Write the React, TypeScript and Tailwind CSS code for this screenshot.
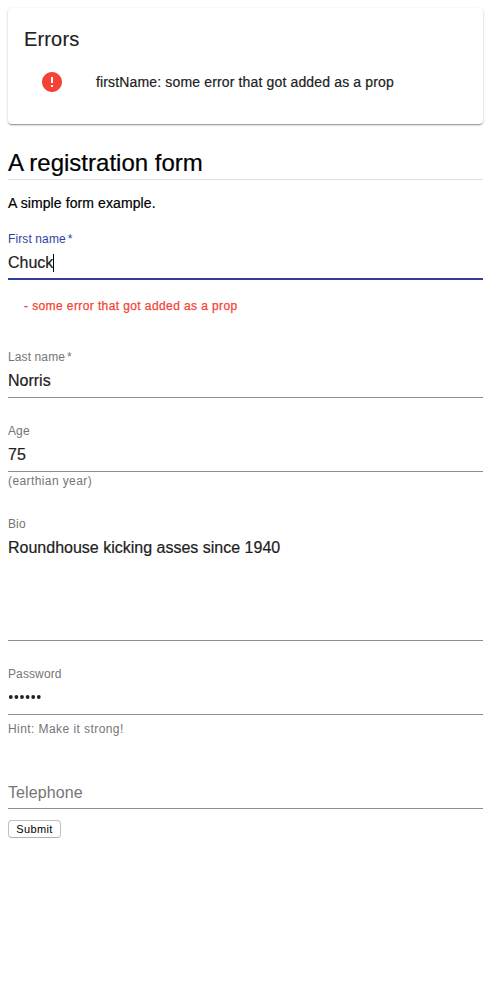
import React from 'react';

type FieldProps = { label: string; value?: string; required?: boolean; focused?: boolean; tall?: boolean; children?: React.ReactNode };

function Field({ label, value, required, focused, tall, children }: FieldProps) {
  return (
    <div className={focused ? 'border-b-2 border-[#303f9f]' : 'border-b border-[#8e8e8e]'}>
      <div className={`h-4 text-[12px] leading-4 tracking-[0.11px] ${focused ? 'text-[#303f9f]' : 'text-[#757575]'}`}>
        {label}{required && <span className="ml-0.5">*</span>}
      </div>
      <div className={`flex items-start pt-[6px] text-[16px] leading-[19px] text-[#212121] [-webkit-text-stroke:0.2px] ${tall ? 'h-[108px]' : focused ? 'h-[31px]' : 'h-8'}`}>
        {children ?? <span>{value}</span>}
        {focused && <span className="mt-px h-[18px] w-px bg-black" />}
      </div>
    </div>
  );
}

export default function App() {
  return (
    <main className="h-[1000px] bg-white px-2 pt-2 font-['Liberation_Sans',sans-serif] text-[#212121]">
      <section className="h-[116px] rounded bg-white px-4 pt-4 shadow-[0_2px_1px_-1px_rgba(0,0,0,0.2),0_1px_1px_0_rgba(0,0,0,0.14),0_1px_3px_0_rgba(0,0,0,0.2)]">
        <h2 className="text-[20px] leading-[30px] tracking-[0.15px] [-webkit-text-stroke:0.15px]">Errors</h2>
        <div className="mt-1 flex h-12 items-center pl-4">
          <svg className="h-6 w-6 shrink-0 fill-[#f44336]" viewBox="0 0 24 24"><path d="M12 2C6.480 2 2 6.480 2 12s4.480 10 10 10 10-4.480 10-10S17.520 2 12 2zm1 15h-2v-2h2v2zm0-4h-2V7h2v6z" /></svg>
          <span className="ml-8 text-[14px] leading-5 tracking-[0.15px] [-webkit-text-stroke:0.2px]">firstName: some error that got added as a prop</span>
        </div>
      </section>
      <h1 className="mt-[22px] h-[34px] border-b border-[#e0e0e0] text-[24px] leading-[34px] text-black [-webkit-text-stroke:0.2px]">A registration form</h1>
      <p className="mt-[13px] h-5 text-[14px] leading-5 tracking-[0.1px] text-black [-webkit-text-stroke:0.2px]">A simple form example.</p>
      <form className="pt-[18px]">
        <Field label="First name" value="Chuck" required focused />
        <p className="mt-4 mb-[33px] h-5 pl-4 text-[12px] leading-5 tracking-[0.4px] text-[#f44336] [-webkit-text-stroke:0.25px]">- some error that got added as a prop</p>
        <Field label="Last name" value="Norris" required />
        <div className="h-[25px]" />
        <Field label="Age" value="75" />
        <p className="mb-[25px] h-[19px] text-[12px] leading-[18px] tracking-[0.4px] text-[#757575]">(earthian year)</p>
        <Field label="Bio" value="Roundhouse kicking asses since 1940" tall />
        <div className="h-[25px]" />
        <Field label="Password">
          <svg className="mt-[5px] h-[9px] w-[36px] shrink-0 fill-[#212121]" viewBox="0 0 36 9" aria-label="Password">
            {Array.from({ length: 6 }, (_, i) => <circle key={i} cx={2.8 + i * 5.6} cy="4" r="1.9" />)}
          </svg>
        </Field>
        <p className="mt-1 h-5 text-[12px] leading-5 tracking-[0.43px] text-[#757575]">Hint: Make it strong!</p>
        <div className="mt-[42px] h-[28px] border-b border-[#8e8e8e] text-[16px] leading-[24px] tracking-[0.1px] text-[#757575]">Telephone</div>
        <button type="button" className="mt-[11px] block h-[18px] w-[53px] rounded border border-[#c0c0c0] border-b-[#b0b0b0] bg-white text-center text-[11px] leading-4 tracking-[0.4px] text-black">Submit</button>
      </form>
    </main>
  );
}
